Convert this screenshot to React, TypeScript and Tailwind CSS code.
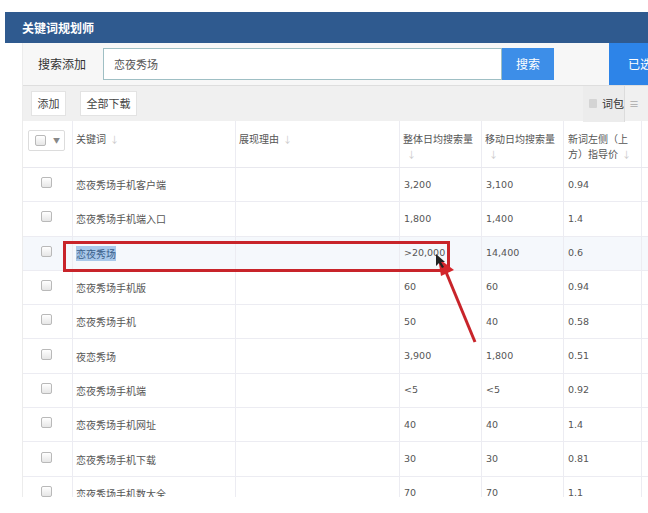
import React from "react";

const rows = [
  ["恋夜秀场手机客户端", "3,200", "3,100", "0.94"],
  ["恋夜秀场手机端入口", "1,800", "1,400", "1.4"],
  ["恋夜秀场", ">20,000", "14,400", "0.6"],
  ["恋夜秀场手机版", "60", "60", "0.94"],
  ["恋夜秀场手机", "50", "40", "0.58"],
  ["夜恋秀场", "3,900", "1,800", "0.51"],
  ["恋夜秀场手机端", "<5", "<5", "0.92"],
  ["恋夜秀场手机网址", "40", "40", "1.4"],
  ["恋夜秀场手机下载", "30", "30", "0.81"],
  ["恋夜秀场手机数大全", "70", "70", "1.1"],
];

const Check = () => (
  <span className="inline-block w-[11px] h-[11px] rounded-[2px] border border-[#b9b9b9] bg-gradient-to-b from-[#ffffff] to-[#e6e6e6]" />
);

const Sort = () => <span className="text-[#c8c8c8] text-[9px] ml-[4px]">↓</span>;

const num = { fontFamily: '"DejaVu Sans", sans-serif', fontSize: 9.5 };

export default function App() {
  const font = { fontFamily: '"Noto Sans CJK SC", "Noto Sans", sans-serif' };
  return (
    <div className="relative w-[648px] h-[513px] bg-white overflow-hidden text-[10px] text-[#555]" style={font}>
      <div className="h-[12px]" />
      <div className="ml-[5px] h-[31px] bg-[#2f5a8f] flex items-center pl-[17px]">
        <span className="text-white text-[12px] font-bold">关键词规划师</span>
      </div>
      <div className="ml-[22px] border-l border-[#ececec]">
        {/* search row */}
        <div className="h-[42px] bg-[#f7f7f7] flex items-center">
          <span className="ml-[15px] w-[65px] text-[12px] text-[#333]">搜索添加</span>
          <div className="h-[32px] w-[399px] border border-[#9fbfc4] bg-white flex items-center pl-[10px] text-[11px] text-[#555]">恋夜秀场</div>
          <div className="h-[32px] w-[52px] bg-[#3d8ee8] text-white text-[12px] flex items-center justify-center">搜索</div>
          <div className="ml-auto h-[42px] w-[39px] bg-[#2d84e8] text-white text-[12px] flex items-center pl-[19px] whitespace-nowrap overflow-hidden">已选</div>
        </div>
        {/* toolbar */}
        <div className="h-[36px] bg-[#f0f0f0] border-t border-[#dedede] flex items-center">
          <div className="ml-[8px] h-[25px] w-[35px] bg-white border border-[#e3e3e3] flex items-center justify-center text-[11px] text-[#444]">添加</div>
          <div className="ml-[14px] h-[25px] w-[57px] bg-white border border-[#e3e3e3] flex items-center justify-center text-[11px] text-[#444]">全部下载</div>
          <div className="ml-auto h-[36px] w-[42px] bg-[#ececec] border-r border-[#dcdcdc] flex items-center pl-[6px] gap-[5px] text-[11px] text-[#333] whitespace-nowrap">
            <span className="inline-block w-[8px] h-[9px] bg-[#d4d4d4] rounded-[1px] shrink-0" />
            <span>词包</span>
          </div>
          <div className="w-[23px] h-[36px] flex items-center pl-[4px] text-[#aaa] text-[10px]">≡</div>
        </div>
        {/* table */}
        <div className="h-[376px] overflow-hidden bg-white">
          <div className="flex h-[47px] border-b border-[#e8e8ee] bg-white">
            <div className="w-[49px] shrink-0 pt-[9px] pl-[5px]">
              <div className="w-[37px] h-[21px] border border-[#dcdcdc] rounded-[2px] flex items-center pl-[6px] gap-[7px]">
                <Check />
                <span className="text-[#888] text-[7px]">▼</span>
              </div>
            </div>
            <div className="w-[163px] shrink-0 border-l border-[#ececf2] pl-[3px] pt-[10px] leading-[15px]">关键词<Sort /></div>
            <div className="w-[164px] shrink-0 border-l border-[#ececf2] pl-[3px] pt-[10px] leading-[15px]">展现理由<Sort /></div>
            <div className="w-[82px] shrink-0 border-l border-[#ececf2] pl-[3px] pt-[10px] leading-[15px] whitespace-nowrap">整体日均搜索量<br /><Sort /></div>
            <div className="w-[82px] shrink-0 border-l border-[#ececf2] pl-[3px] pt-[10px] leading-[15px] whitespace-nowrap">移动日均搜索量<br /><Sort /></div>
            <div className="w-[78px] shrink-0 border-l border-[#ececf2] pl-[4px] pt-[10px] leading-[15px] whitespace-nowrap">新词左侧（上<br />方）指导价<Sort /></div>
            <div className="w-[40px] shrink-0 border-l border-[#ececf2]" />
          </div>
          {rows.map((r, i) => (
            <div key={i} className={`flex h-[34.3px] border-b border-[#ececf2] ${i === 2 ? "bg-[#f5f8fc]" : "bg-white"}`}>
              <div className="w-[49px] shrink-0 flex items-center pl-[18px] pb-[4px]"><Check /></div>
              <div className="w-[163px] shrink-0 border-l border-[#ececf2] pl-[3px] flex items-center whitespace-nowrap">
                {i === 2 ? <span className="bg-[#a9c8ea] text-[#3a5f8a]">{r[0]}</span> : r[0]}
              </div>
              <div className="w-[164px] shrink-0 border-l border-[#ececf2]" />
              <div className="w-[82px] shrink-0 border-l border-[#ececf2] pl-[4px] flex items-center" style={num}>{r[1]}</div>
              <div className="w-[82px] shrink-0 border-l border-[#ececf2] pl-[4px] flex items-center" style={num}>{r[2]}</div>
              <div className="w-[78px] shrink-0 border-l border-[#ececf2] pl-[4px] flex items-center" style={num}>{r[3]}</div>
              <div className="w-[40px] shrink-0 border-l border-[#ececf2]" />
            </div>
          ))}
        </div>
      </div>
      {/* red annotation box */}
      <div className="absolute left-[63px] top-[241px] w-[387px] h-[31px] border-[3px] border-[#c8242a]" />
      {/* arrow */}
      <svg className="absolute left-0 top-0" width="648" height="513" viewBox="0 0 648 513">
        <line x1="475" y1="342" x2="446" y2="272" stroke="#c8242a" strokeWidth="3" />
        <polygon points="438,258 454,270 441,276" fill="#d4252b" />
        <polygon points="436,254 436,266 439,263 442,268 444,267 441,262 445,262" fill="#222" />
      </svg>
    </div>
  );
}
